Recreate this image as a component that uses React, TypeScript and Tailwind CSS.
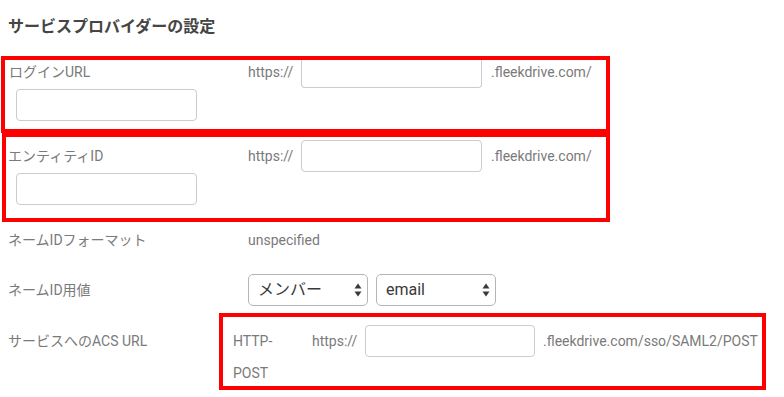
import React from "react";

const font = "font-['Roboto','Noto_Sans_CJK_JP',sans-serif]";

function TextBox({ className = "" }: { className?: string }) {
  return (
    <div
      className={`shrink-0 rounded-[4px] border border-[#cccccc] bg-white ${className}`}
    />
  );
}

function SelectBox({ value }: { value: string }) {
  return (
    <div className="flex h-[32px] w-[120px] shrink-0 items-center justify-between rounded-[5px] border border-[#b5b5b5] bg-white pl-[9px] pr-[5px] text-[16px] text-[#3a3a3a]">
      <span>{value}</span>
      <svg width="8" height="14" viewBox="0 0 8 14">
        <path d="M4 0.5 L7.5 5.5 L0.5 5.5 Z" fill="#3a3a3a" />
        <path d="M4 13.5 L7.5 8.5 L0.5 8.5 Z" fill="#3a3a3a" />
      </svg>
    </div>
  );
}

export default function App() {
  return (
    <div className={`h-[397px] w-[784px] overflow-hidden bg-white text-[14px] text-[#7a7a7a] ${font}`}>
      <h2 className="ml-[8px] mt-[15px] h-[24px] text-[16px] font-bold leading-[24px] text-[#454545]">
        サービスプロバイダーの設定
      </h2>

      {/* ログインURL */}
      <div className="ml-[1px] mt-[17px] h-[77px] w-[609px] border-4 border-[#ff0000]">
        <div className="flex h-[28px] items-start">
          <div className="w-[243px] pl-[4px] leading-[24px]">ログインURL</div>
          <div className="w-[53px] leading-[24px]">https://</div>
          <TextBox className="h-[28px] w-[181px] rounded-t-none border-t-0" />
          <div className="ml-[9px] leading-[24px]">.fleekdrive.com/</div>
        </div>
        <TextBox className="ml-[11px] mt-[1px] h-[32px] w-[181px]" />
      </div>

      {/* エンティティID */}
      <div className="ml-[2px] h-[89px] w-[608px] border-4 border-[#ff0000] pt-[3px]">
        <div className="flex h-[32px] items-center">
          <div className="w-[242px] pl-[2px]">エンティティID</div>
          <div className="w-[53px]">https://</div>
          <TextBox className="h-[32px] w-[181px]" />
          <div className="ml-[9px]">.fleekdrive.com/</div>
        </div>
        <TextBox className="ml-[10px] mt-[1px] h-[32px] w-[181px]" />
      </div>

      <div className="flex h-[36px] items-center pl-[8px]">
        <div className="w-[240px]">ネームIDフォーマット</div>
        <div>unspecified</div>
      </div>

      <div className="flex items-center pl-[8px] pt-[16px]">
        <div className="w-[240px]">ネームID用値</div>
        <div className="flex gap-[8px]">
          <SelectBox value="メンバー" />
          <SelectBox value="email" />
        </div>
      </div>

      {/* ACS URL */}
      <div className="mt-[7px] flex pl-[8px]">
        <div className="mt-[12px] flex h-[32px] w-[211px] items-center">サービスへのACS URL</div>
        <div className="h-[77px] w-[547px] border-4 border-[#ff0000] pt-[8px]">
          <div className="flex">
            <div className="w-[89px] pl-[10px]">
              <div className="flex h-[32px] items-center">HTTP-</div>
              <div className="mt-[4px] leading-[24px]">POST</div>
            </div>
            <div className="flex h-[32px] w-[53px] items-center">https://</div>
            <TextBox className="h-[32px] w-[170px]" />
            <div className="ml-[8px] flex h-[32px] items-center whitespace-nowrap">
              .fleekdrive.com/sso/SAML2/POST
            </div>
          </div>
        </div>
      </div>
    </div>
  );
}
